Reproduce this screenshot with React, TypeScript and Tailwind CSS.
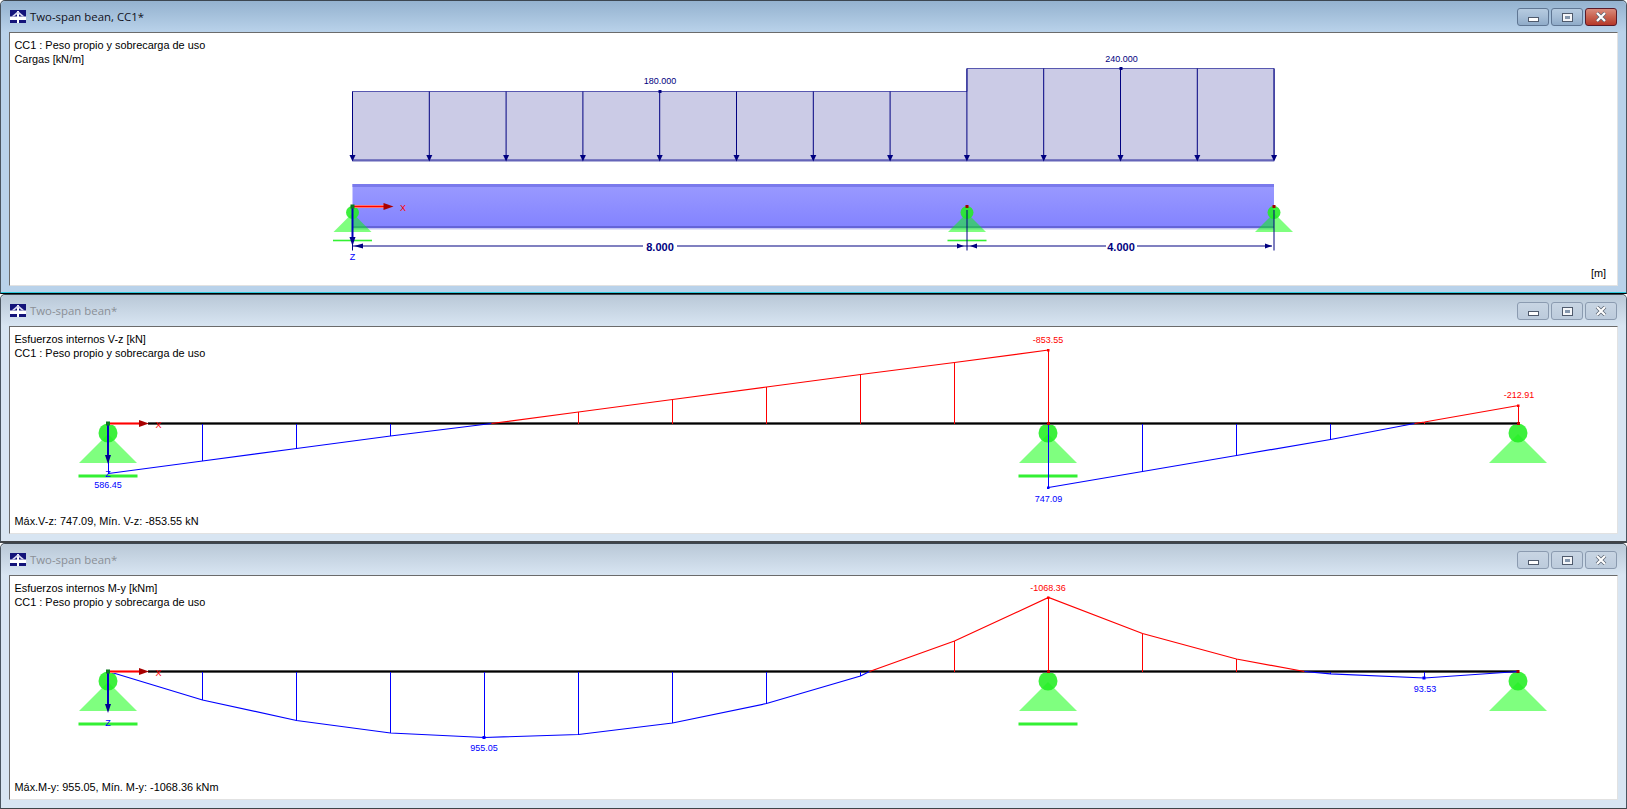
import type { ReactNode } from 'react';

const FONT = '"Liberation Sans", Arial, sans-serif';
const NAVY = '#000080';

function AppIcon() {
  return (
    <svg width="16" height="13" viewBox="0 0 16 13" className="shrink-0">
      <rect width="16" height="13" fill="#14147a" />
      <path d="M0 6.5h16V10H0z" fill="#fff" />
      <path d="M7 1h2v12H7z" fill="#fff" />
      <path d="M1.5 6.5L7.5 1.5h1l6 5h-2.5L8 3.5 4 6.5z" fill="#d8d8f0" />
    </svg>
  );
}

function Caption({ kind, active }: { kind: 'min' | 'max' | 'close'; active: boolean }) {
  const isClose = kind === 'close';
  const skin = isClose && active
    ? 'border-[#5a1a28] bg-linear-to-b from-[#d98b7c] via-[#c8614e] to-[#b5382a]'
    : active
      ? 'border-[#5f7693] bg-linear-to-b from-[#b6cbe0] via-[#a5bdd6] to-[#8fabc8]'
      : 'border-[#8b9bb0] bg-linear-to-b from-[#c8d5e3] to-[#bccbdc]';
  return (
    <div className={`flex h-[18px] w-[32px] items-center justify-center rounded-[3px] border ${skin}`}>
      {kind === 'min' && <div className="mt-[5px] h-[5px] w-[11px] border border-[#4f5a6c] bg-white" />}
      {kind === 'max' && (
        <div className="flex h-[9px] w-[11px] items-center justify-center border border-[#4f5a6c] bg-[#f4f6f9]">
          <div className="h-[3px] w-[5px] bg-[#8597ad]" />
        </div>
      )}
      {kind === 'close' && (
        <svg width="12" height="10" viewBox="0 0 12 10">
          <path d="M2 1l8 8M10 1L2 9" stroke="#5a6472" strokeWidth="3.6" />
          <path d="M2 1l8 8M10 1L2 9" stroke="#fff" strokeWidth="2.2" />
        </svg>
      )}
    </div>
  );
}

interface WindowProps {
  title: string;
  active?: boolean;
  shell: string;
  children: ReactNode;
}

function ChildWindow({ title, active = false, shell, children }: WindowProps) {
  return (
    <div className={`flex flex-col rounded-t-[5px] border-x border-t border-t-[#3c4650] border-x-[#4a5560] ${shell} ${active ? 'bg-[#b9d2ea]' : 'bg-[#d8e5f2]'}`}>
      <div className={`flex h-[31px] shrink-0 items-center pl-[9px] pr-[9px] rounded-t-[5px] ${active ? 'bg-linear-to-b from-[#94b2cf] to-[#b9d2ea]' : 'bg-linear-to-b from-[#b9c8d7] to-[#d8e5f2]'}`}>
        <AppIcon />
        <span
          className={`ml-[4px] text-[11.4px] leading-none ${active ? 'text-[#101020]' : 'text-[#8a8f96]'}`}
          style={{ fontFamily: '"Open Sans", "Noto Sans", sans-serif' }}
        >
          {title}
        </span>
        <div className="ml-auto flex gap-[2px] pt-[1px]">
          <Caption kind="min" active={active} />
          <Caption kind="max" active={active} />
          <Caption kind="close" active={active} />
        </div>
      </div>
      <div className="relative mx-[8px] min-h-0 flex-1 border-y border-x border-t-[#6b6b6b] border-l-[#6b6b6b] border-r-[#e2e2e2] border-b-[#e2e2e2] bg-white">
        {children}
      </div>
    </div>
  );
}

function Notes({ top, bottom }: { top: string[]; bottom: string; }) {
  return (
    <div className="relative flex h-full flex-col justify-between pb-[5px] pl-[4.5px] pt-[5px] text-[10.9px] leading-[14px] text-black">
      <div>
        {top.map((line) => (
          <div key={line}>{line}</div>
        ))}
      </div>
      <div>{bottom}</div>
    </div>
  );
}

function Value({ x, y, color, children, bold }: { x: number; y: number; color: string; children: string; bold?: boolean }) {
  return (
    <text x={x} y={y} fill={color} fontSize={bold ? 11 : 9} fontWeight={bold ? 700 : 400} textAnchor="middle" dominantBaseline="central" fontFamily={FONT}>
      {children}
    </text>
  );
}

function Support({ x, cy, base, half, r, lineY, lineW = 3 }: { x: number; cy: number; base: number; half: number; r: number; lineY?: number; lineW?: number }) {
  return (
    <g>
      <path d={`M${x} ${base - half}L${x + half} ${base}H${x - half}Z`} fill="#00ff00" opacity="0.5" />
      <circle cx={x} cy={cy} r={r} fill="#22ee22" opacity="0.88" />
      {lineY !== undefined && <rect x={x - half - 0.5} y={lineY - lineW / 2} width={half * 2 + 1} height={lineW} fill="#33f033" />}
    </g>
  );
}

function Axes({ x, y, zEnd, labelY }: { x: number; y: number; zEnd: number; labelY: number }) {
  return (
    <g>
      <path d={`M${x} ${y}H${x + 33}`} stroke="#ff9a9a" strokeWidth="3" />
      <path d={`M${x} ${y}H${x + 33}`} stroke="#ff0000" strokeWidth="1.6" />
      <path d={`M${x + 31} ${y - 3.5}L${x + 41} ${y}L${x + 31} ${y + 3.5}Z`} fill="#a80000" />
      <path d={`M${x} ${y}V${zEnd - 6}`} stroke="#0000c0" strokeWidth="2" />
      <path d={`M${x - 3} ${zEnd - 8}H${x + 3}L${x} ${zEnd + 1}Z`} fill="#000090" />
      <rect x={x - 2} y={y - 2} width="4" height="4" fill="#0a7a20" />
      <Value x={x + 50.5} y={y + 1} color="#ff0000">X</Value>
      <Value x={x} y={labelY} color="#0000ff">Z</Value>
    </g>
  );
}

function LoadDiagram() {
  const xs = Array.from({ length: 13 }, (_, i) => 352.5 + i * 76.8);
  const top = (x: number) => (x < 966 ? 91.5 : 68.5);
  return (
    <svg className="absolute left-0 top-0" width="1609" height="253" viewBox="10 33 1609 253">
      <defs>
        <linearGradient id="beam" x1="0" y1="0" x2="0" y2="1">
          <stop offset="0" stopColor="#9a9aff" />
          <stop offset="1" stopColor="#8282ff" />
        </linearGradient>
      </defs>
      <path d="M352.5 160V91.5H967V68.5H1274V160Z" fill="#cbcbe6" stroke="#5858b0" strokeWidth="1" />
      {xs.map((x) => (
        <path key={x} d={`M${x} ${top(x)}V156`} stroke={NAVY} strokeWidth="1" />
      ))}
      <path d="M352.5 160.5H1274" stroke="#6464b8" strokeWidth="2.2" />
      {xs.map((x) => (
        <path key={x} d={`M${x - 3} 155H${x + 3}L${x} 161.5Z`} fill={NAVY} />
      ))}
      <rect x="658.5" y="90" width="3" height="3" fill={NAVY} />
      <rect x="1119.5" y="67" width="3" height="3" fill={NAVY} />
      <Value x={660} y={81} color={NAVY}>180.000</Value>
      <Value x={1121.5} y={59} color={NAVY}>240.000</Value>

      <rect x="352.5" y="184" width="921.5" height="45" fill="url(#beam)" />
      <rect x="352.5" y="184" width="921.5" height="3" fill="#7a7aec" />
      <rect x="352.5" y="226" width="921.5" height="2" fill="#6464d8" />
      <rect x="352.5" y="228" width="921.5" height="1.5" fill="#c4c4f4" />

      <path d="M352.5 246H643M677 246H1106M1137 246H1272" stroke="#8080c0" strokeWidth="2" />
      <Support x={352.5} cy={212.5} base={232} half={19} r={6.5} lineY={240.5} lineW={1.6} />
      <Support x={967} cy={212.5} base={232} half={19} r={6.5} lineY={240.5} lineW={1.6} />
      <Support x={1274} cy={212.5} base={232} half={19} r={6.5} />
      <path d="M967 210V250.5M1274 210V250.5M352.5 240V250.5" stroke={NAVY} strokeWidth="1" />
      <path d="M354 246L363 243.5V248.5Z" fill={NAVY} />
      <path d="M964 246L957 243.5V248.5Z" fill={NAVY} />
      <path d="M970 246L977 243.5V248.5Z" fill={NAVY} />
      <path d="M1272 246L1265 243.5V248.5Z" fill={NAVY} />
      <rect x="965.5" y="205" width="3" height="3" fill="#a00000" />
      <rect x="1272.5" y="205" width="3" height="3" fill="#a00000" />
      <Axes x={352.5} y={206.5} zEnd={245} labelY={257} />
      <Value x={660} y={246.5} color={NAVY} bold>8.000</Value>
      <Value x={1121} y={246.5} color={NAVY} bold>4.000</Value>
    </svg>
  );
}

function ForceLines({ base, offs, color }: { base: number; offs: [number, number][]; color: string }) {
  return (
    <g stroke={color} fill="none">
      {offs.map(([x, d]) => (
        <path key={x} d={`M${x + 0.5} ${base}V${base + d}`} strokeWidth="1" shapeRendering="crispEdges" />
      ))}
      <path strokeWidth="1.2" d={`M${offs[0][0] + 0.5} ${base + offs[0][1]}${offs.slice(1).map(([x, d]) => `L${x + 0.5} ${base + d}`).join('')}`} />
    </g>
  );
}

function ShearDiagram() {
  const base = 423.5;
  const blueLeft: [number, number][] = [[108, 50], [202, 37.5], [296, 25], [390, 12.5], [491, 0]];
  const redLeft: [number, number][] = [[491, 0], [578, -11.5], [672, -24], [766, -36.5], [860, -49], [954, -61], [1048, -73.5]];
  const blueRight: [number, number][] = [[1048, 64], [1142, 48], [1236, 32], [1330, 16], [1414, 0]];
  const redRight: [number, number][] = [[1414, 0], [1424, -1.5], [1518, -18]];
  return (
    <svg className="absolute left-0 top-0" width="1609" height="207" viewBox="10 327 1609 207">
      <Support x={108} cy={433} base={463} half={29} r={9.5} lineY={476} />
      <Support x={1048} cy={433} base={463} half={29} r={9.5} lineY={476} />
      <Support x={1518} cy={433} base={463} half={29} r={9.5} />
      <path d={`M148 ${base}H1518`} stroke="#777" strokeWidth="3" />
      <path d={`M148 ${base}H1518`} stroke="#000" strokeWidth="1.6" />
      <ForceLines base={base} offs={blueLeft} color="#0000ff" />
      <ForceLines base={base} offs={redLeft} color="#ff0000" />
      <ForceLines base={base} offs={blueRight} color="#0000ff" />
      <ForceLines base={base} offs={redRight} color="#ff0000" />
      <rect x="1047" y="486.5" width="2.5" height="2.5" fill="#0000ff" />
      <rect x="1047" y="349" width="2.5" height="2.5" fill="#ff0000" />
      <rect x="1517" y="404.5" width="2.5" height="2.5" fill="#ff0000" />
      <rect x="1047" y="422" width="3" height="3" fill="#c00000" />
      <rect x="1517" y="422" width="3" height="3" fill="#c00000" />
      <Axes x={108} y={423.5} zEnd={463} labelY={474} />
      <Value x={108} y={484.5} color="#0000ff">586.45</Value>
      <Value x={1048} y={340} color="#ff0000">-853.55</Value>
      <Value x={1048.5} y={498.5} color="#0000ff">747.09</Value>
      <Value x={1519} y={395} color="#ff0000">-212.91</Value>
    </svg>
  );
}

function MomentDiagram() {
  const base = 671.5;
  const blue: [number, number][] = [[108, 0], [202, 28.5], [296, 49], [390, 61.5], [484, 66], [578, 63], [672, 51.5], [766, 32], [860, 4.5], [869, 0]];
  const red: [number, number][] = [[869, 0], [954, -30.5], [1048, -74], [1142, -38], [1236, -12.5], [1304, 0]];
  const blueEnd: [number, number][] = [[1304, 0], [1330, 2.3], [1424, 6.5], [1518, 0]];
  return (
    <svg className="absolute left-0 top-0" width="1609" height="223" viewBox="10 576 1609 223">
      <Support x={108} cy={681} base={711} half={29} r={9.5} lineY={724} />
      <Support x={1048} cy={681} base={711} half={29} r={9.5} lineY={724} />
      <Support x={1518} cy={681} base={711} half={29} r={9.5} />
      <path d={`M148 ${base}H1518`} stroke="#777" strokeWidth="3" />
      <path d={`M148 ${base}H1518`} stroke="#000" strokeWidth="1.6" />
      <ForceLines base={base} offs={blue} color="#0000ff" />
      <ForceLines base={base} offs={red} color="#ff0000" />
      <ForceLines base={base} offs={blueEnd} color="#0000ff" />
      <rect x="482.5" y="736" width="3" height="3" fill="#0000ff" />
      <rect x="1422.5" y="676.5" width="3" height="3" fill="#0000ff" />
      <rect x="1047" y="596.5" width="2.5" height="2.5" fill="#ff0000" />
      <rect x="1047" y="670" width="3" height="3" fill="#c00000" />
      <rect x="1516.5" y="670" width="3" height="3" fill="#a00000" />
      <Axes x={108} y={671.5} zEnd={712} labelY={723} />
      <Value x={484} y={748} color="#0000ff">955.05</Value>
      <Value x={1048} y={587.5} color="#ff0000">-1068.36</Value>
      <Value x={1425} y={688.5} color="#0000ff">93.53</Value>
    </svg>
  );
}

export default function App() {
  return (
    <div className="flex h-[809px] w-[1627px] flex-col overflow-hidden bg-white" style={{ fontFamily: FONT }}>
      <ChildWindow title="Two-span bean, CC1*" active shell="h-[294px] shrink-0 border-b border-b-black pb-[7px] shadow-[inset_0_-1px_0_#2cc8dc]">
        <LoadDiagram />
        <div className="relative flex h-full flex-col justify-between pb-[5px] pl-[4.5px] pt-[5px] text-[10.9px] leading-[14px] text-black">
          <div>
            <div>CC1 : Peso propio y sobrecarga de uso</div>
            <div>Cargas [kN/m]</div>
          </div>
          <div className="self-end pr-[11px]">[m]</div>
        </div>
      </ChildWindow>
      <ChildWindow title="Two-span bean*" shell="h-[249px] shrink-0 border-b-2 border-b-[#404448] pb-[7px]">
        <ShearDiagram />
        <Notes top={['Esfuerzos internos V-z [kN]', 'CC1 : Peso propio y sobrecarga de uso']} bottom="Máx.V-z: 747.09, Mín. V-z: -853.55 kN" />
      </ChildWindow>
      <ChildWindow title="Two-span bean*" shell="h-[266px] shrink-0 border-b border-b-[#404448] pb-[8px]">
        <MomentDiagram />
        <Notes top={['Esfuerzos internos M-y [kNm]', 'CC1 : Peso propio y sobrecarga de uso']} bottom="Máx.M-y: 955.05, Mín. M-y: -1068.36 kNm" />
      </ChildWindow>
    </div>
  );
}
